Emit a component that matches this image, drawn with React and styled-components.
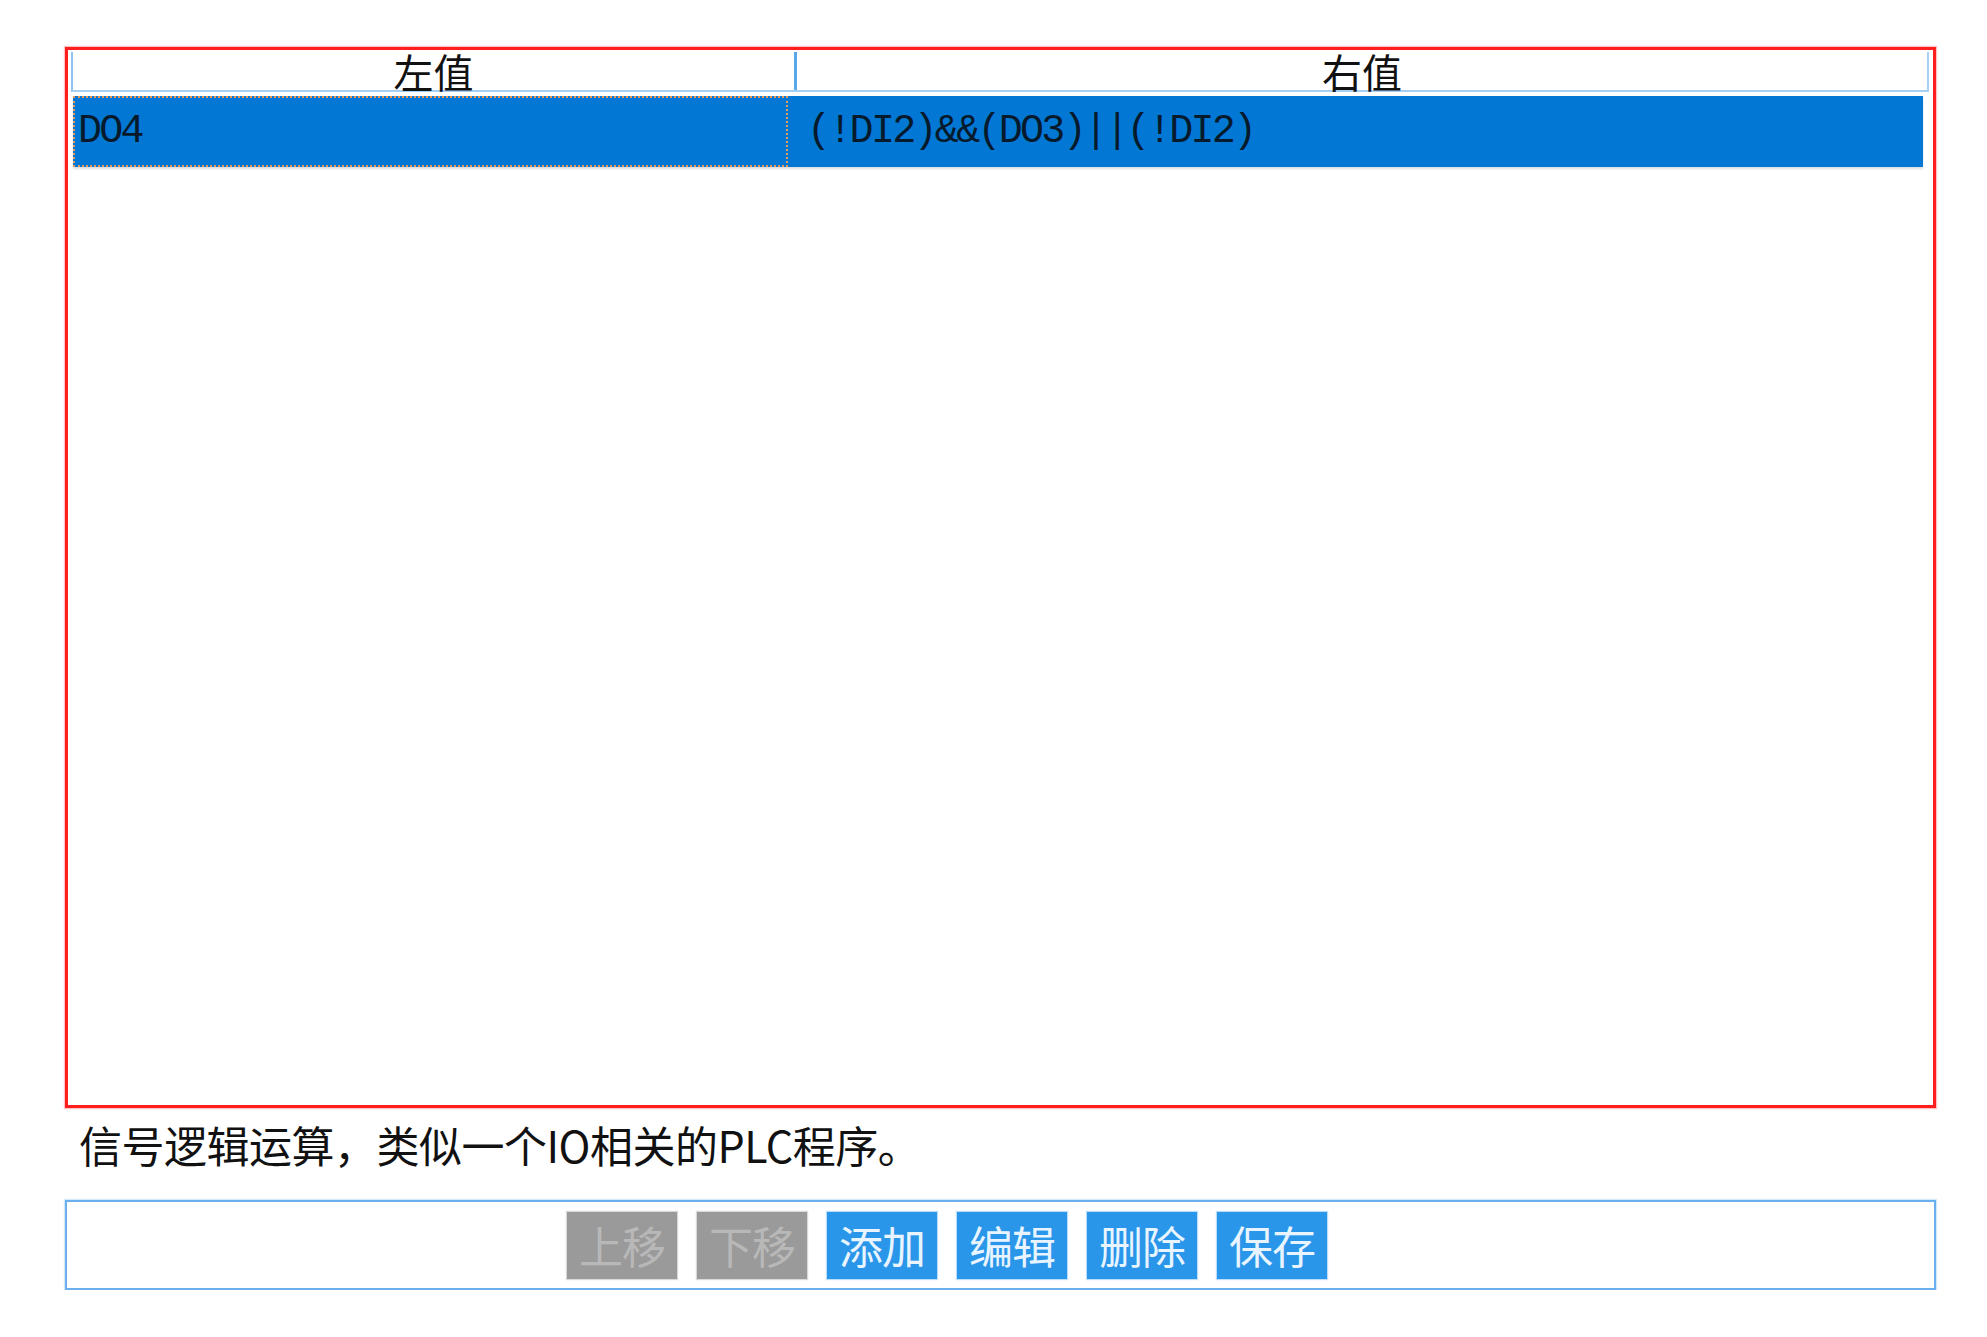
import React from 'react';
import styled, { createGlobalStyle } from 'styled-components';

const GlobalStyle = createGlobalStyle`
  html, body {
    margin: 0;
    padding: 0;
    background: #ffffff;
  }
  body {
    font-family: 'Noto Sans CJK SC', 'Noto Sans', sans-serif;
    color: #111111;
  }
`;

const Page = styled.div`
  width: 1871px;
  padding: 47px 0 0 65px;
`;

const GridBox = styled.div`
  box-sizing: border-box;
  height: 1061px;
  padding: 2px 4px 0 5px;
  border: 3px solid #ff1f1f;
  box-shadow: 0 0 1px 1px rgba(255, 80, 80, 0.35);
`;

const Header = styled.div`
  display: grid;
  grid-template-columns: 721px 3px 1fr;
  height: 38px;
  border-left: 2px solid #8fc3f2;
  border-right: 2px solid #a9d1f5;
  border-bottom: 2px solid #a6cff4;
  box-sizing: content-box;
  margin-left: -2px;
`;

const HeaderCell = styled.div`
  display: flex;
  align-items: center;
  justify-content: center;
  font-size: 40px;
  line-height: 38px;
  color: #111111;
`;

const Divider = styled.div`
  background: #5aa8ec;
`;

const Row = styled.div`
  display: grid;
  grid-template-columns: 715px 1fr;
  column-gap: 5px;
  height: 71px;
  margin-top: 4px;
  margin-right: 6px;
  background: #0277d4;
  box-shadow: 0 2px 2px rgba(160, 160, 160, 0.35);
`;

const Cell = styled.div`
  box-sizing: border-box;
  display: flex;
  align-items: center;
  padding-left: ${p => p.$pad}px;
  font-family: 'Liberation Mono', 'DejaVu Sans Mono', monospace;
  font-size: 40px;
  letter-spacing: -2.7px;
  color: #061a2c;
  white-space: nowrap;
  border: ${p => (p.$focus ? '2px dotted #e89a58' : 'none')};
`;

const Note = styled.div`
  box-sizing: border-box;
  height: 92px;
  padding: 8px 0 0 14px;
  font-size: 43px;
  line-height: 56px;
  letter-spacing: -0.5px;
  color: #111111;
`;

const ButtonBar = styled.div`
  box-sizing: border-box;
  height: 90px;
  display: flex;
  align-items: center;
  gap: 20px;
  padding-left: 500px;
  border: 2px solid #6ab0ee;
  box-shadow: 0 0 1px 1px rgba(150, 200, 245, 0.4);
`;

const Button = styled.button`
  width: 110px;
  height: 67px;
  padding: 0;
  border: none;
  border-radius: 0;
  font-family: 'Noto Sans CJK SC', sans-serif;
  font-size: 44px;
  line-height: 67px;
  letter-spacing: -1px;
  background: ${p => (p.$disabled ? '#9a9a9a' : '#2996e9')};
  color: ${p => (p.$disabled ? '#b8b8b8' : '#e8f4ff')};
  box-shadow: 0 0 1px 1px ${p => (p.$disabled ? 'rgba(180,180,180,0.5)' : 'rgba(120,190,245,0.5)')};
  cursor: ${p => (p.$disabled ? 'default' : 'pointer')};
`;

const buttons = [
  { label: '上移', disabled: true },
  { label: '下移', disabled: true },
  { label: '添加' },
  { label: '编辑' },
  { label: '删除' },
  { label: '保存' },
];

export default function App() {
  return (
    <Page>
      <GlobalStyle />
      <GridBox>
        <Header>
          <HeaderCell>左值</HeaderCell>
          <Divider />
          <HeaderCell>右值</HeaderCell>
        </Header>
        <Row>
          <Cell $focus $pad={3}>DO4</Cell>
          <Cell $pad={14}>(!DI2)&amp;&amp;(DO3)||(!DI2)</Cell>
        </Row>
      </GridBox>
      <Note>信号逻辑运算，类似一个IO相关的PLC程序。</Note>
      <ButtonBar>
        {buttons.map(b => (
          <Button key={b.label} $disabled={b.disabled}>{b.label}</Button>
        ))}
      </ButtonBar>
    </Page>
  );
}
